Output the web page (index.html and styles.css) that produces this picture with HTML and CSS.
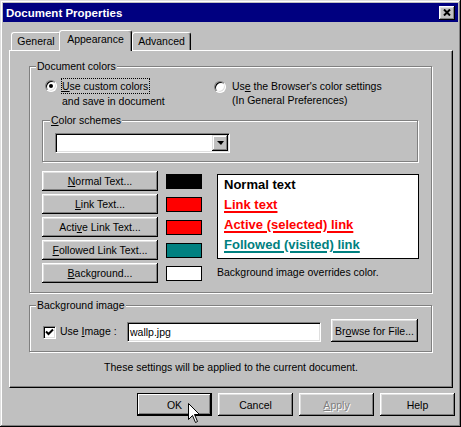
FILE: index.html
```html
<!DOCTYPE html>
<html lang="en">
<head>
    <meta charset="UTF-8">
    <meta name="viewport" content="width=device-width, initial-scale=1.0">
    <title>Document Properties</title>
    <link rel="stylesheet" href="styles.css">
</head>
<body>
    <div class="window">
        <div class="titlebar">
            <span class="title">Document Properties</span>
            <button class="close-btn">
                <svg width="8" height="7" viewBox="0 0 8 7"><path d="M1 0.5 L7 6.5 M7 0.5 L1 6.5" stroke="#000" stroke-width="2" fill="none"/></svg>
            </button>
        </div>

        <div class="tabs">
            <div class="tab tab-general">General</div>
            <div class="tab tab-appearance active">Appearance</div>
            <div class="tab tab-advanced">Advanced</div>
        </div>

        <div class="panel">
            <div class="group doc-colors">
                <div class="legend">Document colors</div>
                <div class="radios">
                    <div class="radio-item first">
                        <span class="radio checked"></span>
                        <div class="radio-text">
                            <span class="focus"><u>U</u>se custom colors</span>
                            <div class="second-line">and save in document</div>
                        </div>
                    </div>
                    <div class="radio-item second">
                        <span class="radio"></span>
                        <div class="radio-text">
                            <div>Us<u>e</u> the Browser's color settings</div>
                            <div>(In General Preferences)</div>
                        </div>
                    </div>
                </div>

                <div class="group schemes">
                    <div class="legend"><u>C</u>olor schemes</div>
                    <div class="select">
                        <span class="drop-btn"><span class="arrow"></span></span>
                    </div>
                </div>

                <div class="color-area">
                    <div class="color-rows">
                        <div class="color-row">
                            <button class="btn color-btn"><u>N</u>ormal Text...</button>
                            <span class="swatch swatch-normal"></span>
                        </div>
                        <div class="color-row">
                            <button class="btn color-btn"><u>L</u>ink Text...</button>
                            <span class="swatch swatch-link"></span>
                        </div>
                        <div class="color-row">
                            <button class="btn color-btn">Acti<u>v</u>e Link Text...</button>
                            <span class="swatch swatch-active"></span>
                        </div>
                        <div class="color-row">
                            <button class="btn color-btn"><u>F</u>ollowed Link Text...</button>
                            <span class="swatch swatch-followed"></span>
                        </div>
                        <div class="color-row">
                            <button class="btn color-btn"><u>B</u>ackground...</button>
                            <span class="swatch swatch-bg"></span>
                        </div>
                    </div>
                    <div class="preview-col">
                        <div class="preview">
                            <div class="pv-normal">Normal text</div>
                            <div class="pv-link">Link text</div>
                            <div class="pv-link">Active (selected) link</div>
                            <div class="pv-visited">Followed (visited) link</div>
                        </div>
                        <div class="override-note">Background image overrides color.</div>
                    </div>
                </div>
            </div>

            <div class="group bg-image">
                <div class="legend">Background image</div>
                <div class="bg-row">
                    <span class="checkbox">
                        <svg width="9" height="9" viewBox="0 0 9 9"><path d="M1 3.5 L3.5 6 L8 1.5" stroke="#000" stroke-width="2" fill="none"/></svg>
                    </span>
                    <span class="bg-label">Use <u>I</u>mage :</span>
                    <span class="textbox">wallp.jpg</span>
                    <button class="btn browse">Br<u>o</u>wse for File...</button>
                </div>
            </div>

            <div class="note">These settings will be applied to the current document.</div>
        </div>

        <div class="footer">
            <button class="btn default">OK</button>
            <button class="btn">Cancel</button>
            <button class="btn disabled"><u>A</u>pply</button>
            <button class="btn">Help</button>
        </div>

        <!-- mouse pointer resting on OK -->
        <svg class="cursor" width="13" height="20" viewBox="0 0 13 20">
            <path d="M0.5 0.5 L0.5 16.5 L4.5 12.5 L7.5 19.5 L9.5 18.5 L6.5 11.5 L11.5 11.5 Z" fill="#fff" stroke="#000" stroke-width="1"/>
        </svg>
    </div>
</body>
</html>
```

FILE: styles.css
```css
* {
    box-sizing: border-box;
}
body {
    margin: 0;
    background: #c0c0c0;
    font-family: "Liberation Sans", Arial, sans-serif;
    font-size: 10.5px;
    color: #000;
}
button {
    font: inherit;
}
.window {
    position: relative;
    width: 461px;
    height: 427px;
    padding: 3px;
    background: #c0c0c0;
    box-shadow: inset -1px -1px #000, inset 1px 1px #dfdfdf, inset -2px -2px #808080, inset 2px 2px #fff;
}

/* Title bar */
.titlebar {
    height: 19px;
    background: #000080;
    color: #fff;
    display: flex;
    align-items: center;
    justify-content: space-between;
    padding: 0 3px;
}
.title {
    font-weight: bold;
    font-size: 11.5px;
}
.close-btn {
    width: 16px;
    height: 14px;
    padding: 0;
    border: none;
    background: #c0c0c0;
    display: flex;
    align-items: center;
    justify-content: center;
    box-shadow: inset -1px -1px #000, inset 1px 1px #fff, inset -2px -2px #808080, inset 2px 2px #dfdfdf;
}

/* Tabs */
.tabs {
    display: flex;
    align-items: flex-end;
    height: 20px;
    margin: 8px 0 0 8px;
}
.tab {
    height: 18px;
    line-height: 16px;
    text-align: center;
    background: #c0c0c0;
    border-top: 1px solid #fff;
    border-left: 1px solid #fff;
    border-right: 1px solid #000;
    border-radius: 3px 3px 0 0;
    box-shadow: inset -1px 0 #808080;
}
.tab-general { width: 50px; }
.tab-appearance { width: 73px; }
.tab-advanced { width: 59px; }
.tab.active {
    position: relative;
    z-index: 1;
    height: 21px;
    line-height: 17px;
    margin: 0 0 -1px -2px;
}

/* Tab page */
.panel {
    width: 444px;
    height: 338px;
    margin-left: 6px;
    padding: 15px 0 0 19px;
    border-top: 1px solid #fff;
    border-left: 1px solid #fff;
    border-right: 1px solid #000;
    border-bottom: 1px solid #000;
    box-shadow: inset -1px -1px #808080;
}

/* Etched group boxes */
.group {
    border: 1px solid #808080;
    box-shadow: inset 1px 1px #fff, 1px 1px #fff;
}
.legend {
    width: fit-content;
    margin: -7px 0 0 6px;
    padding: 0 1px;
    line-height: 13px;
    background: #c0c0c0;
}
.doc-colors {
    width: 403px;
    height: 227px;
}
.radios {
    display: flex;
    height: 32px;
    margin-top: 5px;
    padding-left: 15px;
}
.radio-item {
    display: flex;
    align-items: flex-start;
    line-height: 14px;
}
.radio-item.first {
    width: 169px;
    gap: 4px;
}
.radio-item.second {
    gap: 6px;
    padding-top: 1px;
}
.radio {
    position: relative;
    width: 12px;
    height: 12px;
    margin-top: 2px;
    border-radius: 50%;
    background: #fff;
    border: 1px solid;
    border-color: #808080 #fff #fff #808080;
    box-shadow: inset 1px 1px #000, inset -1px -1px #dfdfdf;
}
.radio.checked::after {
    content: "";
    position: absolute;
    left: 3px;
    top: 3px;
    width: 4px;
    height: 4px;
    border-radius: 50%;
    background: #000;
}
.focus {
    display: inline-block;
    border: 1px dotted #000;
    padding-right: 1px;
}
.second-line {
    padding-left: 1px;
}

.schemes {
    width: 376px;
    height: 42px;
    margin: 10px 0 0 12px;
}
.schemes .legend {
    margin-left: 7px;
}
.select {
    width: 175px;
    height: 20px;
    margin: 6px 0 0 12px;
    padding: 1px;
    display: flex;
    justify-content: flex-end;
    background: #fff;
    border: 1px solid;
    border-color: #808080 #fff #fff #808080;
    box-shadow: inset 1px 1px #000, inset -1px -1px #dfdfdf;
}
.drop-btn {
    width: 16px;
    height: 16px;
    display: flex;
    align-items: center;
    justify-content: center;
    background: #c0c0c0;
    box-shadow: inset -1px -1px #000, inset 1px 1px #dfdfdf, inset -2px -2px #808080, inset 2px 2px #fff;
}
.arrow {
    width: 0;
    height: 0;
    border-left: 4px solid transparent;
    border-right: 3px solid transparent;
    border-top: 4px solid #000;
}

/* Colour buttons, swatches and preview */
.color-area {
    display: flex;
    margin: 9px 0 0 12px;
}
.color-rows {
    display: flex;
    flex-direction: column;
    gap: 3px;
}
.color-row {
    display: flex;
    align-items: center;
    gap: 8px;
}
.btn {
    padding: 0;
    border: none;
    background: #c0c0c0;
    color: #000;
    box-shadow: inset -1px -1px #000, inset 1px 1px #fff, inset -2px -2px #808080, inset 2px 2px #dfdfdf;
}
.color-btn {
    width: 116px;
    height: 20px;
}
.swatch {
    width: 36px;
    height: 15px;
    border: 1px solid #000;
}
.swatch-normal { background: #000; }
.swatch-link { background: #ff0000; }
.swatch-active { background: #ff0000; }
.swatch-followed { background: #008080; }
.swatch-bg { background: #fff; }

.preview-col {
    margin: 3px 0 0 15px;
}
.preview {
    width: 202px;
    height: 85px;
    padding-left: 6px;
    background: #fff;
    border: 1px solid #000;
}
.preview div {
    font-size: 13px;
    font-weight: bold;
    line-height: 20px;
}
.pv-link,
.pv-visited {
    text-decoration: underline;
    text-decoration-thickness: 2px;
    text-underline-offset: 2px;
}
.pv-link { color: #ff0000; }
.pv-visited { color: #008080; }
.override-note {
    margin-top: 7px;
    line-height: 13px;
}

/* Background image */
.bg-image {
    width: 403px;
    height: 47px;
    margin-top: 12px;
}
.bg-row {
    display: flex;
    align-items: center;
    height: 23px;
    margin-top: 7px;
    padding-left: 13px;
}
.checkbox {
    width: 13px;
    height: 13px;
    margin: 3px 4px 0 0;
    display: flex;
    align-items: center;
    justify-content: center;
    background: #fff;
    border: 1px solid;
    border-color: #808080 #fff #fff #808080;
    box-shadow: inset 1px 1px #000, inset -1px -1px #dfdfdf;
}
.bg-label {
    width: 67px;
}
.textbox {
    width: 194px;
    height: 20px;
    margin-top: 2px;
    line-height: 16px;
    background: #fff;
    border: 1px solid;
    border-color: #808080 #fff #fff #808080;
    box-shadow: inset 1px 1px #000, inset -1px -1px #dfdfdf;
    padding: 1px 0 0 2px;
}
.browse {
    width: 87px;
    height: 23px;
    margin-left: 10px;
}

.note {
    width: 442px;
    margin: 9px 0 0 -19px;
    line-height: 13px;
    text-align: center;
}

/* Dialog buttons */
.footer {
    display: flex;
    justify-content: flex-end;
    gap: 6px;
    margin: 5px 3px 0 0;
}
.footer .btn {
    width: 75px;
    height: 23px;
}
.btn.default {
    border: 1px solid #000;
    box-shadow: inset -1px -1px #000, inset 1px 1px #fff, inset -2px -2px #808080;
}
.btn.disabled {
    color: #808080;
    text-shadow: 1px 1px #fff;
}

.cursor {
    position: absolute;
    left: 188px;
    top: 403px;
}
```
